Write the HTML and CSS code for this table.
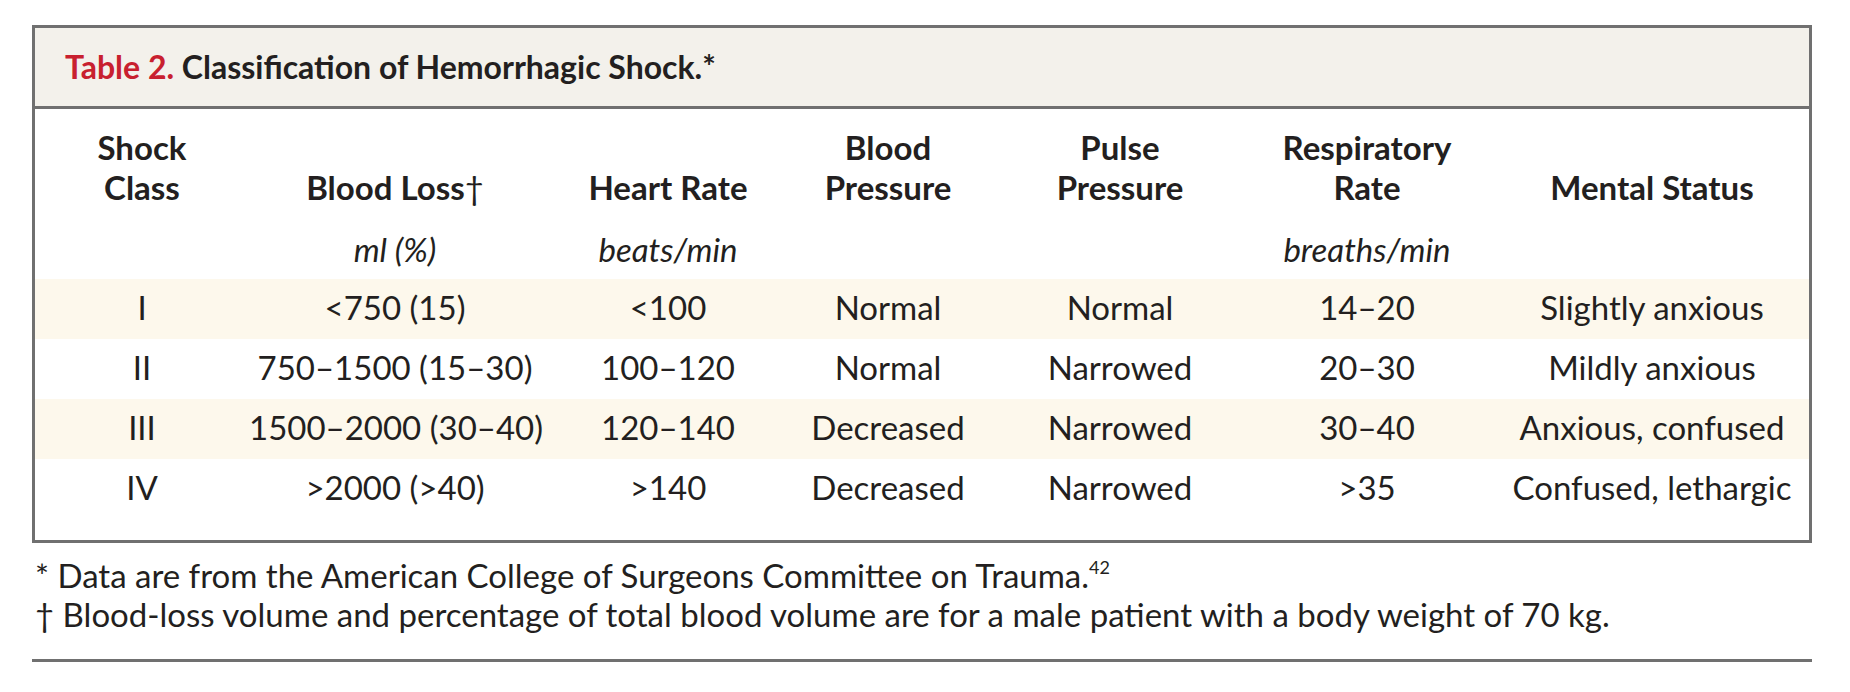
FILE: index.html
```html
<!DOCTYPE html>
<html lang="en">
<head>
<meta charset="utf-8">
<title>Table 2. Classification of Hemorrhagic Shock</title>
<link rel="stylesheet" href="styles.css">
</head>
<body>
<div class="page">
  <section class="table-box">
    <header class="caption"><span class="label">Table 2.</span> Classification of Hemorrhagic Shock.*</header>
    <table class="data">
      <colgroup>
        <col class="c1"><col class="c2"><col class="c3"><col class="c4"><col class="c5"><col class="c6"><col class="c7">
      </colgroup>
      <thead>
        <tr class="head">
          <th>Shock<br>Class</th>
          <th>Blood Loss<span class="dag">†</span></th>
          <th>Heart Rate</th>
          <th>Blood<br>Pressure</th>
          <th>Pulse<br>Pressure</th>
          <th>Respiratory<br>Rate</th>
          <th class="last">Mental Status</th>
        </tr>
        <tr class="units">
          <th></th>
          <th>ml (%)</th>
          <th>beats/min</th>
          <th></th>
          <th></th>
          <th>breaths/min</th>
          <th class="last"></th>
        </tr>
      </thead>
      <tbody>
        <tr class="shade">
          <td>I</td><td>&lt;750 (15)</td><td>&lt;100</td><td>Normal</td><td>Normal</td><td>14–20</td><td class="last">Slightly anxious</td>
        </tr>
        <tr>
          <td>II</td><td>750–1500 (15–30)</td><td>100–120</td><td>Normal</td><td>Narrowed</td><td>20–30</td><td class="last">Mildly anxious</td>
        </tr>
        <tr class="shade">
          <td>III</td><td>1500–2000 (30–40)</td><td>120–140</td><td>Decreased</td><td>Narrowed</td><td>30–40</td><td class="last">Anxious, confused</td>
        </tr>
        <tr>
          <td>IV</td><td>&gt;2000 (&gt;40)</td><td>&gt;140</td><td>Decreased</td><td>Narrowed</td><td>&gt;35</td><td class="last">Confused, lethargic</td>
        </tr>
      </tbody>
    </table>
  </section>
  <div class="notes">
    <p>* Data are from the American College of Surgeons Committee on Trauma.<sup>42</sup></p>
    <p>† Blood-loss volume and percentage of total blood volume are for a male patient with a body weight of 70 kg.</p>
  </div>
  <div class="rule"></div>
</div>
</body>
</html>
```

FILE: styles.css
```css
html, body {
  margin: 0;
  padding: 0;
  background: #ffffff;
}

body {
  font-family: "Lato", "Open Sans", "Liberation Sans", sans-serif;
  color: #231f20;
  font-size: 33px;
  line-height: 40px;
}

.page {
  width: 1780px;
  margin-left: 32px;
  padding-top: 25px;
}

.table-box {
  border: 3px solid #707070;
  padding-bottom: 21px;
}

.caption {
  background: #f3f1eb;
  border-bottom: 3px solid #707070;
  padding: 19px 0 19px 30px;
  font-weight: 700;
  font-size: 32px;
  line-height: 40px;
  color: #231f20;
}

.caption .label {
  color: #c8202f;
}

.data {
  width: 1774px;
  border-collapse: collapse;
  table-layout: fixed;
}

.c1 { width: 214px; }
.c2 { width: 292px; }
.c3 { width: 254px; }
.c4 { width: 186px; }
.c5 { width: 278px; }
.c6 { width: 216px; }
.c7 { width: 334px; }

.data th,
.data td {
  padding: 0;
  text-align: center;
  white-space: nowrap;
}

.data .last {
  padding-left: 20px;
}

.head th {
  font-weight: 700;
  vertical-align: bottom;
  padding-top: 18px;
}

.dag {
  font-weight: 400;
}

.units th {
  font-weight: 400;
  font-style: italic;
  padding-top: 22px;
  padding-bottom: 10px;
}

.data tbody td {
  height: 60px;
  box-sizing: border-box;
  padding-top: 8px;
  padding-bottom: 12px;
  vertical-align: top;
}

.data tbody tr.shade td {
  background: #fdf8ec;
}

.notes {
  margin-top: 13px;
  padding-left: 3px;
  line-height: 39px;
}

.notes p {
  margin: 0;
}

.notes sup {
  font-size: 18px;
  line-height: 0;
  vertical-align: 14px;
}

.rule {
  margin-top: 25px;
  height: 3px;
  background: #707070;
}
```
